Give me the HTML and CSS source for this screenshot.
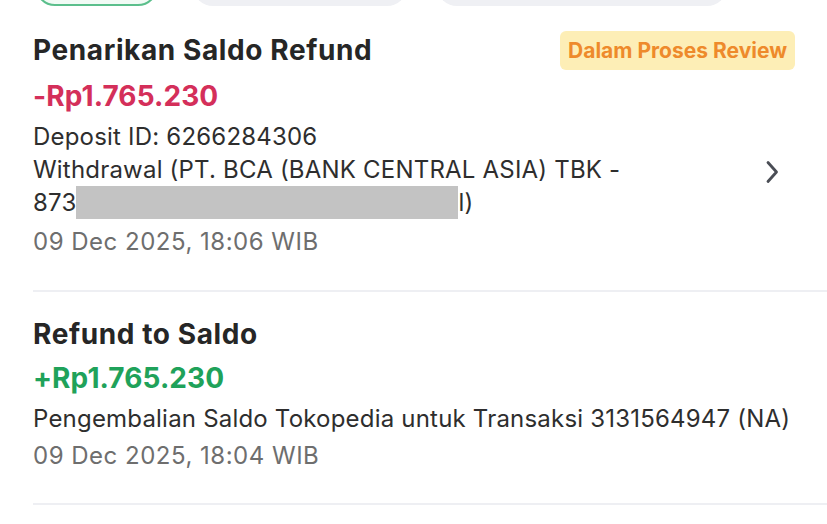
FILE: index.html
```html
<!DOCTYPE html>
<html>
<head>
<meta charset="utf-8">
<link rel="stylesheet" href="styles.css">
</head>
<body>
<div class="chips">
  <div class="chip chip-active"></div>
  <div class="chip chip-2"></div>
  <div class="chip chip-3"></div>
</div>
<div class="list">
  <div class="item item-1">
    <div class="content">
      <div class="title">Penarikan Saldo Refund</div>
      <div class="amount amount-neg">-Rp1.765.230</div>
      <div class="desc">Deposit ID: 6266284306<br>Withdrawal (PT. BCA (BANK CENTRAL ASIA) TBK -<br>873<span class="redact"></span>l)</div>
      <div class="date">09 Dec 2025, 18:06 WIB</div>
    </div>
    <div class="aside">
      <div class="badge">Dalam Proses Review</div>
      <div class="chev-wrap">
        <svg class="chev" width="14" height="24" viewBox="0 0 14 24"><path d="M3 2.5 L11.5 12 L3 21.5" fill="none" stroke="#4a4d55" stroke-width="2.8" stroke-linecap="round" stroke-linejoin="round"/></svg>
      </div>
    </div>
  </div>
  <div class="divider"></div>
  <div class="item item-2">
    <div class="content">
      <div class="title">Refund to Saldo</div>
      <div class="amount amount-pos">+Rp1.765.230</div>
      <div class="desc">Pengembalian Saldo Tokopedia untuk Transaksi 3131564947 (NA)</div>
      <div class="date">09 Dec 2025, 18:04 WIB</div>
    </div>
  </div>
  <div class="divider"></div>
</div>
</body>
</html>
```

FILE: styles.css
```css
* { box-sizing: border-box; }
html, body { margin: 0; padding: 0; background: #ffffff; }
body {
  font-family: Inter, "Noto Sans", sans-serif;
  color: #2b2b2b;
  width: 827px;
  height: 524px;
  overflow: hidden;
}
.chips {
  display: flex;
  height: 40px;
  margin-top: -34px;
  padding-left: 35px;
}
.chip {
  height: 40px;
  border-radius: 20px;
  background: #eff0f4;
}
.chip-active {
  width: 123px;
  background: #f1fbf5;
  border: 2px solid #5bbf8c;
}
.chip-2 { width: 214px; margin-left: 35px; }
.chip-3 { width: 290px; margin-left: 30px; }
.list { padding-left: 33px; }
.item {
  display: flex;
  padding-right: 32px;
}
.item-1 { padding-top: 27px; padding-bottom: 31px; }
.item-2 { padding-top: 25px; padding-bottom: 30px; }
.content { flex: 1; min-width: 0; }
.title {
  font-size: 28px;
  font-weight: 700;
  line-height: 34px;
  color: #262626;
  letter-spacing: 0.6px;
  white-space: nowrap;
}
.amount {
  font-size: 28px;
  font-weight: 700;
  line-height: 36px;
  letter-spacing: 0.1px;
}
.item-1 .amount { margin-top: 11px; }
.item-2 .amount { margin-top: 9px; }
.amount-neg { color: #d42f5a; }
.amount-pos { color: #1fa25a; }
.desc {
  font-size: 24px;
  line-height: 33px;
  color: #2e2e2e;
  letter-spacing: 0.2px;
  white-space: nowrap;
}
.item-1 .desc { margin-top: 6px; }
.item-2 .desc { margin-top: 6px; }
.redact {
  display: inline-block;
  width: 382px;
  height: 33px;
  background: #c3c3c3;
  vertical-align: -8px;
}
.date {
  font-size: 24px;
  line-height: 34px;
  color: #6e6e6e;
  letter-spacing: 0.5px;
  white-space: nowrap;
}
.item-1 .date { margin-top: 6px; }
.item-2 .date { margin-top: 4px; }
.aside {
  display: flex;
  flex-direction: column;
  align-items: flex-end;
}
.badge {
  margin-top: -2px;
  background: #fdeeb6;
  color: #ee8a2b;
  font-size: 21px;
  font-weight: 700;
  line-height: 39px;
  height: 39px;
  padding: 0 8px;
  border-radius: 6px;
  white-space: nowrap;
}
.chev-wrap {
  flex: 1;
  display: flex;
  align-items: center;
  padding-right: 16px;
  padding-top: 15px;
}
.chev { display: block; }
.divider {
  height: 2px;
  background: #eeeff3;
}
```
